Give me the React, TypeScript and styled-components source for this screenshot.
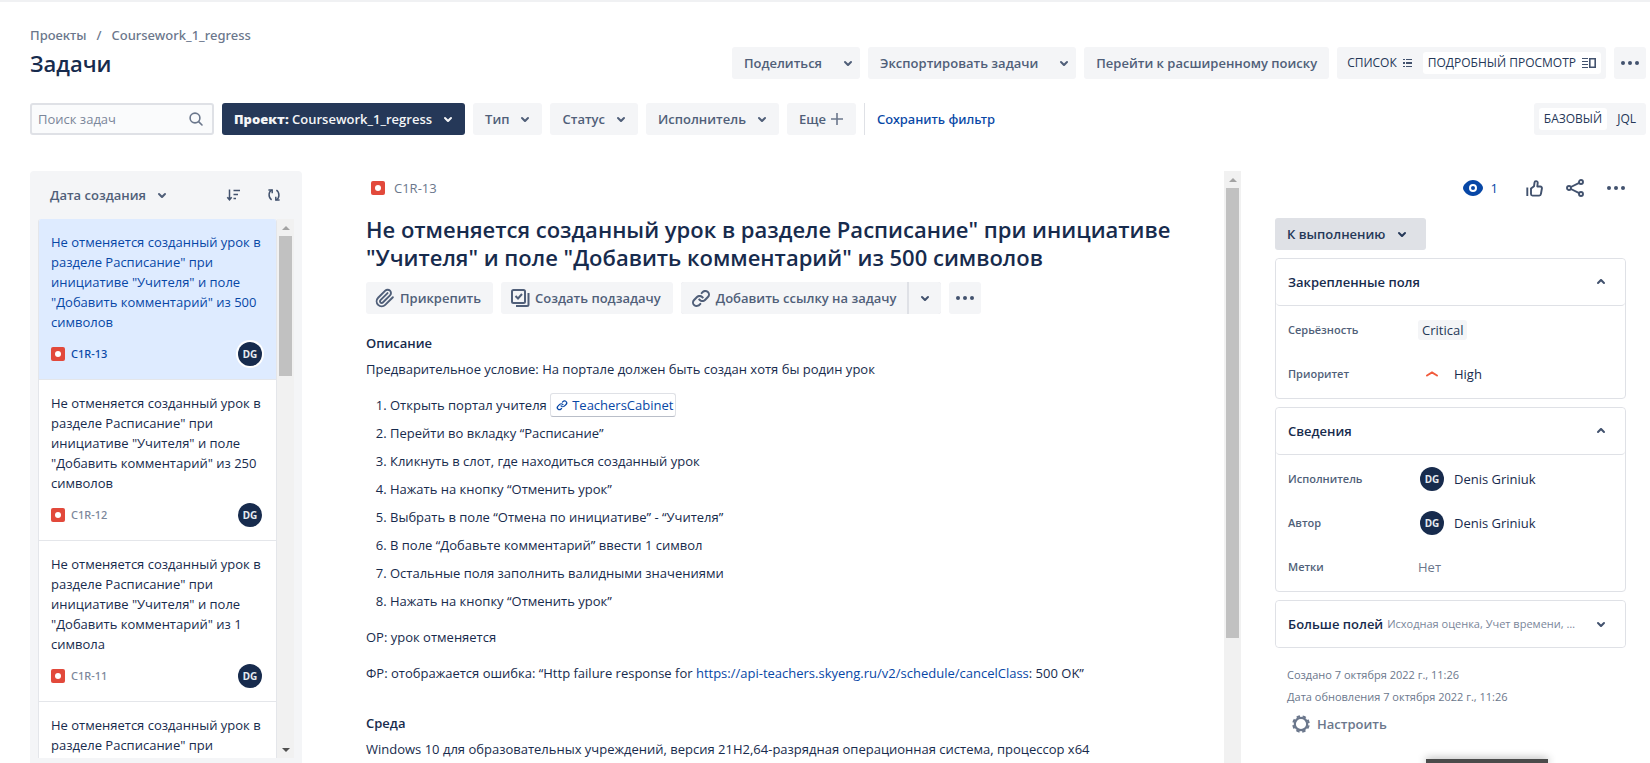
import React from 'react';
import styled, { createGlobalStyle, css } from 'styled-components';

const GlobalStyle = createGlobalStyle`
  *, *::before, *::after { box-sizing: border-box; }
  body {
    margin: 0;
    background: #fff;
    color: #172b4d;
    font: 400 13px/20px "Open Sans", "Noto Sans", sans-serif;
  }
  button, input { font: inherit; color: inherit; }
  h1, h2, h3, p, ol, ul, dl, dd { margin: 0; padding: 0; }
  ul { list-style: none; }
  a { color: #0747a6; text-decoration: none; }
  svg { display: block; flex: none; }
`;

const mediumFont = css`
  font-family: "Noto Sans", "Open Sans", sans-serif;
  font-weight: 500;
`;

/* ---------- icons ---------- */

const ChevronDown = () => (
  <svg width="24" height="24" viewBox="0 0 24 24" aria-hidden="true">
    <path
      fill="currentColor"
      d="M8.292 10.293a1.009 1.009 0 000 1.419l2.939 2.965c.218.215.5.322.779.322s.556-.107.769-.322l2.93-2.955a1.01 1.01 0 000-1.419.987.987 0 00-1.406 0l-2.298 2.317-2.307-2.327a.99.99 0 00-1.406 0z"
    />
  </svg>
);

const ChevronUp = () => (
  <svg width="24" height="24" viewBox="0 0 24 24" aria-hidden="true">
    <path
      fill="currentColor"
      d="M8.292 13.707a1.009 1.009 0 010-1.419l2.939-2.965c.218-.215.5-.322.779-.322s.556.107.769.322l2.93 2.955a1.01 1.01 0 010 1.419.987.987 0 01-1.406 0l-2.298-2.317-2.307 2.327a.99.99 0 01-1.406 0z"
    />
  </svg>
);

const Dots = () => (
  <svg width="24" height="24" viewBox="0 0 24 24" fill="currentColor" aria-hidden="true">
    <circle cx="5" cy="12" r="2" />
    <circle cx="12" cy="12" r="2" />
    <circle cx="19" cy="12" r="2" />
  </svg>
);

const SearchIcon = () => (
  <svg width="16" height="16" viewBox="0 0 16 16" fill="none" stroke="#6b778c" strokeWidth="1.6" aria-hidden="true">
    <circle cx="7" cy="7" r="4.9" />
    <path d="M10.6 10.6L14 14" strokeLinecap="round" />
  </svg>
);

const PlusIcon = () => (
  <svg width="14" height="14" viewBox="0 0 14 14" stroke="#6b778c" strokeWidth="1.6" aria-hidden="true">
    <path d="M1 7h12M7 1v12" />
  </svg>
);

const ListIcon = () => (
  <svg width="10" height="8" viewBox="0 0 10 8" fill="#42526e" aria-hidden="true">
    <path d="M0 0h2v1H0zM0 3h2v2H0zM0 7h2v1H0zM3 0h6v1H3zM3 3h6v2H3zM3 7h6v1H3z" />
  </svg>
);

const DetailIcon = () => (
  <svg width="14" height="10" viewBox="0 0 14 10" fill="#42526e" aria-hidden="true">
    <path d="M0 0h6v1H0zM0 3h6v1H0zM0 6h6v1H0zM0 9h6v1H0z" />
    <path d="M7.800 .8h5.400v8.400H7.800z" fill="none" stroke="#42526e" strokeWidth="1.600" />
  </svg>
);

const SortIcon = () => (
  <svg width="16" height="14" viewBox="0 0 16 14" fill="none" stroke="#42526e" strokeWidth="1.5" aria-hidden="true">
    <path d="M3.500 1.500v10M1.300 9.300l2.200 2.500 2.200-2.500" />
    <path d="M7.500 2.500h6.500M7.500 6.500h4.500M7.500 10.500h2.500" />
  </svg>
);

const RefreshIcon = () => (
  <svg width="14" height="14" viewBox="0 0 14 14" fill="none" stroke="#42526e" strokeWidth="1.5" aria-hidden="true">
    <path d="M4.800 2.200C1.200 4 1.200 9.500 4.600 11.800" />
    <path d="M1.400 1.900h3.800v3.400" />
    <path d="M9.200 11.800C12.800 10 12.800 4.500 9.400 2.200" />
    <path d="M12.600 12.100h-3.800V8.700" />
  </svg>
);

const BugIcon = () => (
  <svg width="14" height="14" viewBox="0 0 14 14" aria-hidden="true">
    <rect width="14" height="14" rx="2" fill="#e2493b" />
    <circle cx="7" cy="7" r="3" fill="#fff" />
  </svg>
);

const ClipIcon = () => (
  <svg width="20" height="20" viewBox="0 0 24 24" fill="none" stroke="currentColor" strokeWidth="2.3" strokeLinecap="round" strokeLinejoin="round" aria-hidden="true">
    <path d="M21.440 11.050l-9.190 9.190a6 6 0 0 1-8.490-8.490l8.570-8.570A4 4 0 1 1 18 8.840l-8.590 8.570a2 2 0 0 1-2.830-2.830l8.490-8.480" />
  </svg>
);

const LinkIcon = ({ size = 24 }: { size?: number }) => (
  <svg width={size} height={size} viewBox="0 0 24 24" fill="currentColor" aria-hidden="true">
    <path d="M12.856 5.457l-.937.92a1.002 1.002 0 000 1.437 1.047 1.047 0 001.463 0l.984-.966c.967-.95 2.542-1.135 3.602-.288a2.54 2.54 0 01.203 3.81l-2.903 2.852a2.646 2.646 0 01-3.696 0l-1.11-1.09L9 13.57l1.108 1.089c1.822 1.788 4.802 1.788 6.622 0l2.905-2.852a4.558 4.558 0 00-.357-6.82c-1.893-1.517-4.695-1.226-6.422.47" />
    <path d="M11.144 19.543l.937-.92a1.002 1.002 0 000-1.437 1.047 1.047 0 00-1.462 0l-.985.966c-.967.95-2.542 1.135-3.602.288a2.54 2.54 0 01-.203-3.81l2.903-2.852a2.646 2.646 0 013.696 0l1.11 1.09L15 11.43l-1.108-1.089c-1.822-1.788-4.802-1.788-6.622 0l-2.905 2.852a4.558 4.558 0 00.357 6.82c1.893 1.517 4.695 1.226 6.422-.47" />
  </svg>
);

const SubtaskIcon = () => (
  <svg width="20" height="20" viewBox="0 0 20 20" fill="none" stroke="currentColor" strokeWidth="2" aria-hidden="true">
    <rect x="2" y="2" width="13" height="13" rx="1.500" />
    <path d="M5.500 8l2.500 2.500L12 6" />
    <path d="M6 18h11a1.500 1.500 0 001.500-1.500V5" />
  </svg>
);

const EyeIcon = () => (
  <svg width="20" height="16" viewBox="0 0 20 16" aria-hidden="true">
    <path d="M10 0C4.500 0 0 5 0 8s4.500 8 10 8 10-5 10-8-4.500-8-10-8z" fill="#0747a6" />
    <circle cx="10" cy="8" r="3" fill="none" stroke="#fff" strokeWidth="2" />
  </svg>
);

const ThumbIcon = () => (
  <svg width="17" height="17" viewBox="0 0 17 17" fill="none" stroke="currentColor" strokeWidth="1.900" strokeLinejoin="round" aria-hidden="true">
    <path d="M1.300 7.500V16" />
    <path d="M5 8.500L8 6.300l.5-3.700a1.600 1.600 0 0 1 3.200.3l-.4 3.600h3a1.700 1.700 0 0 1 1.600 2l-1 5.500a1.800 1.800 0 0 1-1.700 1.600H6.500A1.500 1.500 0 0 1 5 14.100z" />
  </svg>
);

const ShareIcon = () => (
  <svg width="18" height="18" viewBox="0 0 18 18" fill="none" stroke="currentColor" strokeWidth="1.900" aria-hidden="true">
    <circle cx="3" cy="9" r="2" />
    <circle cx="15" cy="3" r="2" />
    <circle cx="15" cy="15" r="2" />
    <path d="M4.900 8l8.300-4.100M4.900 10l8.300 4.100" />
  </svg>
);

const PriorityIcon = () => (
  <svg width="14" height="8" viewBox="0 0 14 8" fill="none" stroke="#f15b3c" strokeWidth="2" strokeLinecap="round" aria-hidden="true">
    <path d="M2 5.500L7 2.500l5 3" />
  </svg>
);

const GearIcon = () => (
  <svg width="18" height="18" viewBox="0 0 18 18" fill="none" stroke="#6b778c" aria-hidden="true">
    <circle cx="9" cy="9" r="6.200" strokeWidth="2.200" />
    <circle cx="9" cy="9" r="7.800" strokeWidth="2" strokeDasharray="3.400 2.726" strokeDashoffset="-1.400" />
  </svg>
);

/* ---------- shared parts ---------- */

const Button = styled.button<{ $tone?: 'subtle' | 'dark' | 'grey'; $chevron?: boolean }>`
  display: inline-flex;
  align-items: center;
  height: 32px;
  padding: 0 ${p => (p.$chevron ? 5 : 12)}px 0 12px;
  border: 0;
  border-radius: 3px;
  font-weight: 600;
  white-space: nowrap;
  cursor: pointer;
  background: #f4f5f7;
  color: #505f79;
  gap: 4px;
  ${p => p.$tone === 'dark' && css`background: #253858; color: #f4f5f7;`}
  ${p => p.$tone === 'grey' && css`background: #dfe1e6; color: #253858;`}
`;

const SplitButton = styled(Button)`
  gap: 14px;
  padding-right: 0;
`;

const IconButton = styled.button<{ $plain?: boolean }>`
  display: inline-flex;
  align-items: center;
  justify-content: center;
  width: 32px;
  height: 32px;
  padding: 0;
  border: 0;
  border-radius: 3px;
  background: ${p => (p.$plain ? 'transparent' : '#f4f5f7')};
  color: #42526e;
  cursor: pointer;
`;

const Segmented = styled.div`
  display: flex;
  align-items: center;
  gap: 5px;
  height: 32px;
  padding: 5px;
  border-radius: 3px;
  background: #f4f5f7;
`;

const Segment = styled.button<{ $active?: boolean }>`
  display: flex;
  align-items: center;
  gap: 6px;
  height: 22px;
  padding: 0 5px;
  border: 0;
  border-radius: 3px;
  font-size: 12px;
  background: ${p => (p.$active ? '#fff' : 'transparent')};
  color: #253858;
  white-space: nowrap;
`;

const AvatarCircle = styled.span<{ $ring?: boolean }>`
  display: inline-flex;
  align-items: center;
  justify-content: center;
  flex: none;
  width: 24px;
  height: 24px;
  border-radius: 50%;
  background: #172b4d;
  color: #e6eaf0;
  font-size: 10px;
  line-height: 12px;
  font-weight: 700;
  box-shadow: ${p => (p.$ring ? '0 0 0 2px #fff' : 'none')};
`;

/* ---------- page ---------- */

const Page = styled.div`
  display: flex;
  flex-direction: column;
  height: 100vh;
  overflow: hidden;
  border-top: 2px solid #f0f1f3;
`;

const Header = styled.header`
  display: flex;
  flex-direction: column;
  padding: 23px 4px 0 30px;
`;

const Breadcrumbs = styled.nav`
  display: flex;
  gap: 10px;
  color: #6b778c;
  ${mediumFont}
  a { color: inherit; }
`;

const TitleRow = styled.div`
  display: flex;
  align-items: center;
  justify-content: space-between;
  height: 32px;
  margin: 2px 0 24px;
`;

const PageTitle = styled.h1`
  font-size: 22px;
  line-height: 28px;
  font-weight: 600;
`;

const Actions = styled.div`
  display: flex;
  align-items: center;
  gap: 8px;
`;

const FilterRow = styled.div`
  display: flex;
  align-items: center;
  justify-content: space-between;
`;

const SearchBox = styled.label`
  display: flex;
  align-items: center;
  width: 184px;
  height: 32px;
  padding: 0 8px 0 6px;
  border: 2px solid #dfe1e6;
  border-radius: 3px;
  background: #fafbfc;
  input {
    flex: 1;
    min-width: 0;
    padding: 0;
    border: 0;
    outline: 0;
    background: transparent;
  }
  input::placeholder { color: #7a869a; opacity: 1; }
`;

const SaveFilter = styled.a`
  display: flex;
  align-items: center;
  height: 32px;
  padding-left: 12px;
  border-left: 1px solid #dfe1e6;
  ${mediumFont}
`;

const Body = styled.div`
  display: flex;
  flex: 1;
  min-height: 0;
  margin-top: 36px;
  padding-left: 30px;
`;

/* ---------- issue list ---------- */

const ListPanel = styled.aside`
  display: flex;
  flex-direction: column;
  flex: none;
  width: 272px;
  padding: 0 8px 5px;
  border-radius: 4px 4px 0 0;
  background: #f4f5f7;
`;

const ListHeader = styled.div`
  display: flex;
  align-items: center;
  justify-content: space-between;
  height: 48px;
  padding-right: 4px;
  ${Button} { background: transparent; }
`;

const ListScroll = styled.div`
  display: flex;
  flex: 1;
  min-height: 0;
`;

const Cards = styled.ul`
  flex: 1;
  min-width: 0;
  overflow: hidden;
  border: 1px solid #e4e6ea;
  border-width: 0 1px;
  border-radius: 3px 3px 0 0;
  background: #fff;
`;

const Card = styled.li<{ $selected?: boolean }>`
  border-bottom: 1px solid #e4e6ea;
  background: ${p => (p.$selected ? '#deebff' : '#fff')};
  a {
    display: flex;
    flex-direction: column;
    gap: 10px;
    padding: 13px 12px;
    color: ${p => (p.$selected ? '#0747a6' : '#172b4d')};
  }
`;

const CardFooter = styled.div<{ $selected?: boolean }>`
  display: flex;
  align-items: center;
  gap: 6px;
  padding-right: 2px;
  font-size: 11px;
  ${mediumFont}
  color: ${p => (p.$selected ? '#0747a6' : '#7a869a')};
  ${AvatarCircle} { margin-left: auto; }
`;

/* ---------- scroll bars ---------- */

const Track = styled.div`
  display: flex;
  flex-direction: column;
  align-items: center;
  flex: none;
  width: 17px;
  background: #f1f1f1;
`;

const Thumb = styled.div<{ $share: number }>`
  width: 13px;
  height: ${p => p.$share}%;
  background: #c1c1c1;
`;

const Arrow = styled.span<{ $down?: boolean }>`
  display: flex;
  align-items: center;
  justify-content: center;
  flex: none;
  width: 17px;
  height: 17px;
  margin-top: ${p => (p.$down ? 'auto' : 0)};
  &::before {
    content: "";
    border: 4px solid transparent;
    border-width: ${p => (p.$down ? '4px 4px 0' : '0 4px 4px')};
    border-color: ${p => (p.$down ? '#505050 transparent' : 'transparent transparent #a3a3a3')};
  }
`;

const ScrollBar = ({ share, end }: { share: number; end?: boolean }) => (
  <Track aria-hidden="true">
    <Arrow />
    <Thumb $share={share} />
    {end && <Arrow $down />}
  </Track>
);

/* ---------- issue content ---------- */

const Issue = styled.main`
  flex: 1;
  min-width: 0;
  overflow: hidden;
  padding: 7px 48px 0 64px;
`;

const IssueKey = styled.div`
  display: flex;
  align-items: center;
  gap: 9px;
  padding-left: 5px;
  color: #6b778c;
`;

const IssueTitle = styled.h2`
  margin: 17px 0 11px;
  font-size: 22px;
  line-height: 28px;
  font-weight: 600;
`;

const Tool = styled(Button)`
  padding-left: 9px;
  gap: 5px;
`;

const Joined = styled.div`
  display: flex;
  gap: 2px;
  border-radius: 3px;
  background: #dfe1e6;
  ${Tool} { border-radius: 3px 0 0 3px; padding: 0 11px 0 8px; gap: 3px; }
  ${IconButton} { border-radius: 0 3px 3px 0; }
`;

const SectionTitle = styled.h3`
  margin: 19px 0 6px;
  font-size: 13px;
  line-height: 20px;
  font-weight: 600;
  p + & { margin-top: 30px; }
`;

const Text = styled.p`
  line-height: 20px;
  & + & { margin-top: 16px; }
`;

const Steps = styled.ol`
  display: flex;
  flex-direction: column;
  gap: 8px;
  margin: 16px 0;
  padding-left: 24px;
`;

const InlineCard = styled.a`
  display: inline-flex;
  align-items: center;
  gap: 3px;
  height: 24px;
  margin: -2px 0;
  padding: 0 2px 0 4px;
  border: 1px solid #dfe1e6;
  border-bottom-color: #b9bec8;
  border-radius: 3px;
  vertical-align: top;
`;

/* ---------- details ---------- */

const Side = styled.aside`
  flex: none;
  width: 409px;
  padding: 0 24px 0 34px;
`;

const SideTools = styled.div`
  display: flex;
  align-items: center;
  justify-content: flex-end;
  gap: 9px;
  height: 34px;
  margin: 0 -6px 13px 0;
`;

const Watch = styled.button`
  display: flex;
  align-items: center;
  gap: 8px;
  margin-right: 11px;
  padding: 0;
  border: 0;
  background: none;
  color: #0747a6;
`;

const StatusButton = styled(Button)`
  gap: 5px;
  margin-bottom: 8px;
`;

const Group = styled.section`
  margin-bottom: 8px;
  border: 1px solid #dfe1e6;
  border-radius: 4px;
`;

const GroupHead = styled.button<{ $open?: boolean }>`
  display: flex;
  align-items: center;
  gap: 4px;
  width: 100%;
  height: ${p => (p.$open ? 47 : 46)}px;
  padding: 0 12px;
  border: 0;
  border-bottom: ${p => (p.$open ? '1px solid #dfe1e6' : '0')};
  border-radius: 4px;
  background: #fff;
  color: #172b4d;
  font-weight: 600;
  text-align: left;
  svg { margin-left: auto; color: #42526e; }
`;

const Hint = styled.span`
  flex: 1;
  min-width: 0;
  margin-right: 4px;
  overflow: hidden;
  color: #7a869a;
  font-size: 11px;
  font-weight: 400;
  text-overflow: ellipsis;
  white-space: nowrap;
`;

const Fields = styled.dl`
  display: flex;
  flex-direction: column;
  gap: 20px;
  padding: 12px;
`;

const Field = styled.div`
  display: grid;
  grid-template-columns: 130px 1fr;
  align-items: center;
  height: 24px;
  dt {
    font-size: 11px;
    font-weight: 600;
    color: #505f79;
  }
  dd { display: flex; align-items: center; }
`;

const Tag = styled.span`
  padding: 0 4px;
  border-radius: 3px;
  background: #f4f5f7;
  color: #253858;
`;

const Value = styled.span<{ $muted?: boolean }>`
  display: flex;
  align-items: center;
  gap: 10px;
  padding-left: ${p => (p.$muted ? 0 : 2)}px;
  color: ${p => (p.$muted ? '#6b778c' : '#172b4d')};
`;

const IconSlot = styled.span`
  display: flex;
  justify-content: center;
  width: 24px;
`;

const Stamps = styled.div`
  display: flex;
  flex-direction: column;
  gap: 2px;
  padding: 9px 0 5px 12px;
  color: #6b778c;
  font-size: 11px;
`;

const Configure = styled.button`
  display: flex;
  align-items: center;
  gap: 7px;
  height: 24px;
  margin-left: 17px;
  padding: 0;
  border: 0;
  background: none;
  color: #6b778c;
  font-weight: 600;
`;

const Dock = styled.div`
  position: fixed;
  right: 102px;
  bottom: 0;
  width: 122px;
  height: 4px;
  background: #4b4b4b;
  box-shadow: 0 0 8px rgba(0, 0, 0, 0.45);
`;

const issues = [
  { key: 'C1R-13', tail: '500 символов' },
  { key: 'C1R-12', tail: '250 символов' },
  { key: 'C1R-11', tail: '1 символа' },
  { key: 'C1R-10', tail: '0 символов' },
];

const steps = [
  'Перейти во вкладку “Расписание”',
  'Кликнуть в слот, где находиться созданный урок',
  'Нажать на кнопку “Отменить урок”',
  'Выбрать в поле “Отмена по инициативе” - “Учителя”',
  'В поле “Добавьте комментарий” ввести 1 символ',
  'Остальные поля заполнить валидными значениями',
  'Нажать на кнопку “Отменить урок”',
];

const Person = () => (
  <Value>
    <AvatarCircle>DG</AvatarCircle>
    Denis Griniuk
  </Value>
);

export default function App() {
  return (
    <Page>
      <GlobalStyle />
      <Header>
        <Breadcrumbs aria-label="Навигация">
          <a href="#projects">Проекты</a>
          <span>/</span>
          <a href="#project">Coursework_1_regress</a>
        </Breadcrumbs>
        <TitleRow>
          <PageTitle>Задачи</PageTitle>
          <Actions>
            <SplitButton>Поделиться<ChevronDown /></SplitButton>
            <SplitButton>Экспортировать задачи<ChevronDown /></SplitButton>
            <Button>Перейти к расширенному поиску</Button>
            <Segmented>
              <Segment>СПИСОК <ListIcon /></Segment>
              <Segment $active>ПОДРОБНЫЙ ПРОСМОТР <DetailIcon /></Segment>
            </Segmented>
            <IconButton aria-label="Действия"><Dots /></IconButton>
          </Actions>
        </TitleRow>
        <FilterRow>
          <Actions>
            <SearchBox>
              <input type="text" placeholder="Поиск задач" aria-label="Поиск задач" />
              <SearchIcon />
            </SearchBox>
            <Button $tone="dark" $chevron><span><b>Проект:</b> Coursework_1_regress</span><ChevronDown /></Button>
            <Button $chevron>Тип<ChevronDown /></Button>
            <Button $chevron>Статус<ChevronDown /></Button>
            <Button $chevron>Исполнитель<ChevronDown /></Button>
            <Button>Еще <PlusIcon /></Button>
            <SaveFilter href="#save">Сохранить фильтр</SaveFilter>
          </Actions>
          <Segmented>
            <Segment $active>БАЗОВЫЙ</Segment>
            <Segment>JQL</Segment>
          </Segmented>
        </FilterRow>
      </Header>

      <Body>
        <ListPanel>
          <ListHeader>
            <Button $chevron>Дата создания<ChevronDown /></Button>
            <Actions>
              <IconButton $plain aria-label="Порядок сортировки"><SortIcon /></IconButton>
              <IconButton $plain aria-label="Обновить"><RefreshIcon /></IconButton>
            </Actions>
          </ListHeader>
          <ListScroll>
            <Cards>
              {issues.map((issue, i) => (
                <Card key={issue.key} $selected={i === 0}>
                  <a href={`#${issue.key}`}>
                    <p>Не отменяется созданный урок в разделе Расписание" при инициативе "Учителя" и поле "Добавить комментарий" из {issue.tail}</p>
                    <CardFooter $selected={i === 0}>
                      <BugIcon />
                      {issue.key}
                      <AvatarCircle $ring={i === 0}>DG</AvatarCircle>
                    </CardFooter>
                  </a>
                </Card>
              ))}
            </Cards>
            <ScrollBar share={26} end />
          </ListScroll>
        </ListPanel>

        <Issue>
          <IssueKey><BugIcon />C1R-13</IssueKey>
          <IssueTitle>
            Не отменяется созданный урок в разделе Расписание" при инициативе "Учителя" и поле "Добавить комментарий" из 500 символов
          </IssueTitle>
          <Actions>
            <Tool><ClipIcon />Прикрепить</Tool>
            <Tool><SubtaskIcon />Создать подзадачу</Tool>
            <Joined>
              <Tool><LinkIcon />Добавить ссылку на задачу</Tool>
              <IconButton aria-label="Другие ссылки"><ChevronDown /></IconButton>
            </Joined>
            <IconButton aria-label="Ещё"><Dots /></IconButton>
          </Actions>

          <SectionTitle>Описание</SectionTitle>
          <Text>Предварительное условие: На портале должен быть создан хотя бы родин урок</Text>
          <Steps>
            <li>
              Открыть портал учителя{' '}
              <InlineCard href="#teachers"><LinkIcon size={14} />TeachersCabinet</InlineCard>
            </li>
            {steps.map((step, i) => <li key={i}>{step}</li>)}
          </Steps>
          <Text>ОР: урок отменяется</Text>
          <Text>
            ФР: отображается ошибка: “Http failure response for{' '}
            <a href="#api">https://api-teachers.skyeng.ru/v2/schedule/cancelClass</a>: 500 OK”
          </Text>
          <SectionTitle>Среда</SectionTitle>
          <Text>Windows 10 для образовательных учреждений, версия 21H2,64-разрядная операционная система, процессор x64</Text>
        </Issue>
        <ScrollBar share={76} />

        <Side>
          <SideTools>
            <Watch aria-label="Наблюдатели"><EyeIcon />1</Watch>
            <IconButton $plain aria-label="Голосовать"><ThumbIcon /></IconButton>
            <IconButton $plain aria-label="Поделиться"><ShareIcon /></IconButton>
            <IconButton $plain aria-label="Действия с задачей"><Dots /></IconButton>
          </SideTools>
          <StatusButton $tone="grey">К выполнению<ChevronDown /></StatusButton>
          <Group>
            <GroupHead $open>Закрепленные поля<ChevronUp /></GroupHead>
            <Fields>
              <Field><dt>Серьёзность</dt><dd><Tag>Critical</Tag></dd></Field>
              <Field><dt>Приоритет</dt><dd><Value><IconSlot><PriorityIcon /></IconSlot>High</Value></dd></Field>
            </Fields>
          </Group>
          <Group>
            <GroupHead $open>Сведения<ChevronUp /></GroupHead>
            <Fields>
              <Field><dt>Исполнитель</dt><dd><Person /></dd></Field>
              <Field><dt>Автор</dt><dd><Person /></dd></Field>
              <Field><dt>Метки</dt><dd><Value $muted>Нет</Value></dd></Field>
            </Fields>
          </Group>
          <Group>
            <GroupHead>Больше полей<Hint>Исходная оценка, Учет времени, Эпик, Компоненты</Hint><ChevronDown /></GroupHead>
          </Group>
          <Stamps>
            <p>Создано 7 октября 2022 г., 11:26</p>
            <p>Дата обновления 7 октября 2022 г., 11:26</p>
          </Stamps>
          <Configure><GearIcon />Настроить</Configure>
        </Side>
      </Body>
      <Dock />
    </Page>
  );
}
